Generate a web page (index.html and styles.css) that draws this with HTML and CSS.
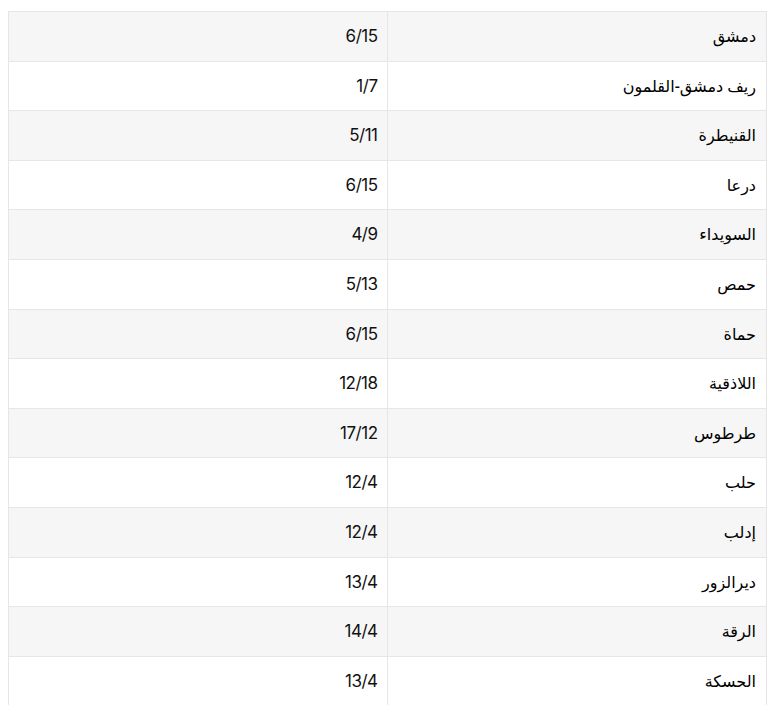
FILE: index.html
```html
<!DOCTYPE html>
<html lang="ar" dir="rtl">
<head>
<meta charset="utf-8">
<link rel="stylesheet" href="styles.css">
</head>
<body>
<div class="wrap">
<table class="grid">
<tbody>
<tr><td>دمشق</td><td class="num">6/15</td></tr>
<tr><td>ريف دمشق-القلمون</td><td class="num">1/7</td></tr>
<tr><td>القنيطرة</td><td class="num">5/11</td></tr>
<tr><td>درعا</td><td class="num">6/15</td></tr>
<tr><td>السويداء</td><td class="num">4/9</td></tr>
<tr><td>حمص</td><td class="num">5/13</td></tr>
<tr><td>حماة</td><td class="num">6/15</td></tr>
<tr><td>اللاذقية</td><td class="num">12/18</td></tr>
<tr><td>طرطوس</td><td class="num">17/12</td></tr>
<tr><td>حلب</td><td class="num">12/4</td></tr>
<tr><td>إدلب</td><td class="num">12/4</td></tr>
<tr><td>ديرالزور</td><td class="num">13/4</td></tr>
<tr><td>الرقة</td><td class="num">14/4</td></tr>
<tr><td>الحسكة</td><td class="num">13/4</td></tr>
</tbody>
</table>
</div>
</body>
</html>
```
FILE: styles.css
```css
html, body {
  margin: 0;
  padding: 0;
  background: #fff;
}
.wrap {
  padding: 11px 13px 0 8px;
}
.grid {
  width: 759px;
  border-collapse: collapse;
  table-layout: fixed;
  font-family: "Noto Sans", "DejaVu Sans", sans-serif;
  font-size: 16px;
  font-weight: 500;
  color: #000;
}
.grid td {
  border: 1px solid #e6e6e6;
  padding: 12px 10px;
  line-height: 24.6px;
  text-align: right;
  width: 50%;
}
.grid tr:nth-child(odd) td {
  background: #f6f6f6;
}
.grid td.num {
  direction: ltr;
  text-align: right;
  padding-right: 9px;
  font-family: "Inter", "Noto Sans", sans-serif;
  font-size: 17px;
  font-weight: 400;
  letter-spacing: -0.5px;
  color: #111;
}
```
